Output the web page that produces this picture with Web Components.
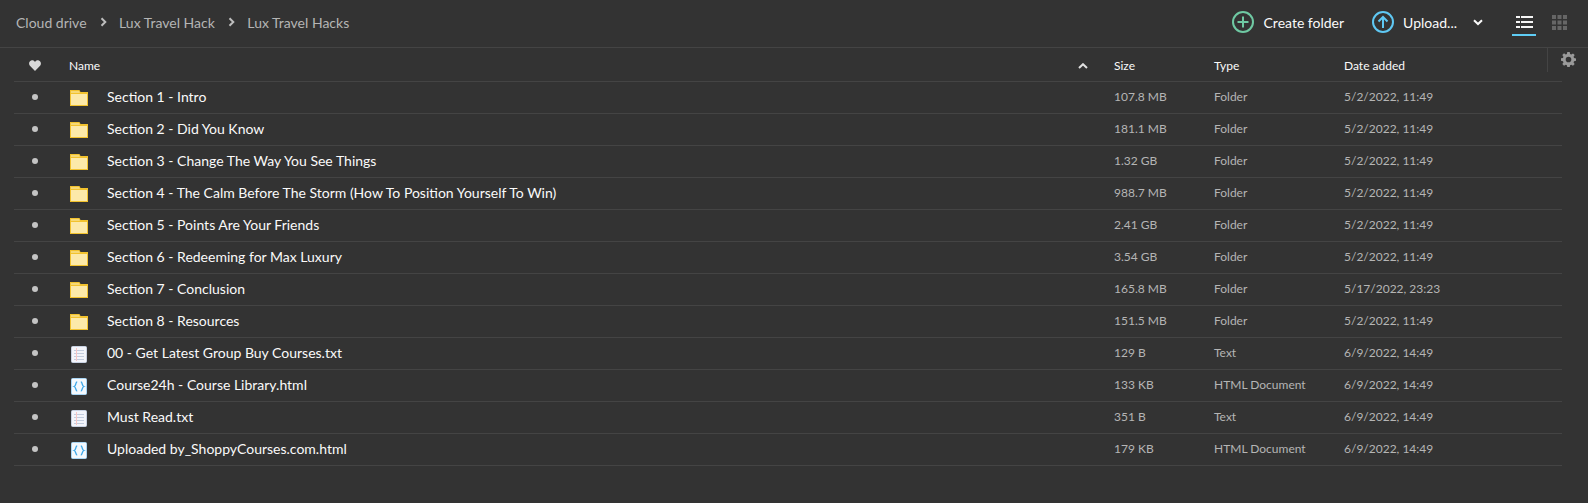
<!DOCTYPE html>
<html>
<head>
<meta charset="utf-8">
<style>
  html, body { margin: 0; height: 100%; background: #333333; }
  body { font-family: Lato, "Open Sans", sans-serif; overflow: hidden; }
</style>
</head>
<body>
<drive-page>
  <drive-topbar slot="top"></drive-topbar>
  <file-list>
    <file-row kind="folder" name="Section 1 - Intro" size="107.8 MB" type="Folder" date="5/2/2022, 11:49"></file-row>
    <file-row kind="folder" name="Section 2 - Did You Know" size="181.1 MB" type="Folder" date="5/2/2022, 11:49"></file-row>
    <file-row kind="folder" name="Section 3 - Change The Way You See Things" size="1.32 GB" type="Folder" date="5/2/2022, 11:49"></file-row>
    <file-row kind="folder" name="Section 4 - The Calm Before The Storm (How To Position Yourself To Win)" size="988.7 MB" type="Folder" date="5/2/2022, 11:49"></file-row>
    <file-row kind="folder" name="Section 5 - Points Are Your Friends" size="2.41 GB" type="Folder" date="5/2/2022, 11:49"></file-row>
    <file-row kind="folder" name="Section 6 - Redeeming for Max Luxury" size="3.54 GB" type="Folder" date="5/2/2022, 11:49"></file-row>
    <file-row kind="folder" name="Section 7 - Conclusion" size="165.8 MB" type="Folder" date="5/17/2022, 23:23"></file-row>
    <file-row kind="folder" name="Section 8 - Resources" size="151.5 MB" type="Folder" date="5/2/2022, 11:49"></file-row>
    <file-row kind="text" name="00 - Get Latest Group Buy Courses.txt" size="129 B" type="Text" date="6/9/2022, 14:49"></file-row>
    <file-row kind="html" name="Course24h - Course Library.html" size="133 KB" type="HTML Document" date="6/9/2022, 14:49"></file-row>
    <file-row kind="text" name="Must Read.txt" size="351 B" type="Text" date="6/9/2022, 14:49"></file-row>
    <file-row kind="html" name="Uploaded by_ShoppyCourses.com.html" size="179 KB" type="HTML Document" date="6/9/2022, 14:49"></file-row>
  </file-list>
</drive-page>

<script>
const chevronRight = `<svg width="8" height="10" viewBox="0 0 8 10"><path d="M1.500 1.200 5.300 5 1.500 8.800" fill="none" stroke="#bdbdbd" stroke-width="2"/></svg>`;

class DrivePage extends HTMLElement {
  constructor() {
    super();
    this.attachShadow({ mode: 'open' });
    this.shadowRoot.innerHTML = `
      <style>
        :host { display: block; width: 1588px; height: 503px; background: #333333; }
      </style>
      <slot name="top"></slot>
      <slot></slot>`;
  }
}

class DriveTopbar extends HTMLElement {
  constructor() {
    super();
    this.attachShadow({ mode: 'open' });
    this.shadowRoot.innerHTML = `
      <style>
        :host { display: flex; align-items: center; height: 44px; padding: 0 17px 3px 16px; border-bottom: 1px solid #444444; font-size: 14px; }
        .crumbs { display: flex; align-items: center; color: #b5b5b5; flex: 1; }
        .crumbs svg { margin: 0 11.500px 0 13px; }
        .btn { display: flex; align-items: center; color: #fafafa; }
        .btn svg { display: block; margin-right: 9px; }
        .create { margin-right: 28px; }
        .create svg { margin-right: 10px; }
        .caret { margin: 0 29px 0 16px; display: block; }
        .views { display: flex; gap: 11px; align-self: flex-start; margin-top: 4px; }
        .view { width: 24px; height: 32px; box-sizing: border-box; padding-top: 6px; display: flex; align-items: center; justify-content: center; border-bottom: 2px solid transparent; }
        .view.on { border-bottom-color: #5fcdf5; }
      </style>
      <div class="crumbs">
        <span>Cloud drive</span>${chevronRight}<span>Lux Travel Hack</span>${chevronRight}<span>Lux Travel Hacks</span>
      </div>
      <div class="btn create">
        <svg width="22" height="22" viewBox="0 0 22 22"><circle cx="11" cy="11" r="10" fill="none" stroke="#6fc9a3" stroke-width="2"/><path d="M11 5.500v11M5.500 11h11" stroke="#6fc9a3" stroke-width="2"/></svg>
        <span>Create folder</span>
      </div>
      <div class="btn">
        <svg width="22" height="22" viewBox="0 0 22 22"><circle cx="11" cy="11" r="10" fill="none" stroke="#5fc8f3" stroke-width="2"/><path d="M11 17V6M6.500 10.500 11 6l4.500 4.500" fill="none" stroke="#5fc8f3" stroke-width="2"/></svg>
        <span>Upload...</span>
      </div>
      <svg class="caret" width="10" height="7" viewBox="0 0 10 7"><path d="M1 1.200 5 5l4-3.800" fill="none" stroke="#fafafa" stroke-width="2"/></svg>
      <div class="views">
        <div class="view on"><svg width="17" height="12" viewBox="0 0 17 12"><path d="M0 1h4M5 1h12M0 6h4M5 6h12M0 11h4M5 11h12" stroke="#f5f5f5" stroke-width="2"/></svg></div>
        <div class="view"><svg width="15" height="15" viewBox="0 0 15 15" fill="#666666"><rect width="4" height="4"/><rect x="5.500" width="4" height="4"/><rect x="11" width="4" height="4"/><rect y="5.500" width="4" height="4"/><rect x="5.500" y="5.500" width="4" height="4"/><rect x="11" y="5.500" width="4" height="4"/><rect y="11" width="4" height="4"/><rect x="5.500" y="11" width="4" height="4"/><rect x="11" y="11" width="4" height="4"/></svg></div>
      </div>`;
  }
}

class FileList extends HTMLElement {
  constructor() {
    super();
    this.attachShadow({ mode: 'open' });
    this.shadowRoot.innerHTML = `
      <style>
        :host { display: block; position: relative; padding: 0 26px 0 14px; }
        .head { display: grid; grid-template-columns: 55px 1045px 1fr; height: 31px; padding-top: 2px; border-bottom: 1px solid #444444; align-items: center; font-size: 12px; color: #fafafa; }
        .head .heart { padding-left: 15px; display: flex; }
        .name { display: flex; justify-content: space-between; align-items: center; padding-right: 26px; }
        .cols { display: grid; grid-template-columns: 100px 130px 1fr; }
        .gear { position: absolute; top: 0; left: 1547px; width: 41px; height: 24px; border-left: 1px solid #444444; box-sizing: border-box; display: flex; justify-content: center; padding-top: 4px; }
      </style>
      <div class="head">
        <div class="heart"><svg width="12" height="11" viewBox="0 0 12 11"><path d="M6 11 .9 5.800C-.6 4 0 1.200 2.200.5 3.800 0 5.200.7 6 2c.8-1.300 2.200-2 3.800-1.500C12 1.200 12.600 4 11.100 5.800z" fill="#d8d8d8"/></svg></div>
        <div class="name"><span>Name</span><svg width="10" height="6" viewBox="0 0 10 6"><path d="M1 5 5 1.200 9 5" fill="none" stroke="#e0e0e0" stroke-width="2"/></svg></div>
        <div class="cols"><span>Size</span><span>Type</span><span>Date added</span></div>
      </div>
      <slot></slot>
      <div class="gear"><svg width="15" height="15" viewBox="0 0 16 16"><path fill="#9a9a9a" fill-rule="evenodd" d="M6.700 0h2.600l.4 2.100 1.300.6L12.800 1.500l1.800 1.800-1.200 1.800.5 1.300 2.100.4v2.600l-2.100.4-.5 1.300 1.200 1.800-1.800 1.800-1.800-1.200-1.300.5-.4 2.100H6.700l-.4-2.100-1.300-.5-1.800 1.200-1.800-1.800 1.200-1.800-.5-1.300L0 9.300V6.700l2.100-.4.500-1.300-1.200-1.800 1.800-1.800 1.800 1.200 1.300-.6zM8 5a3 3 0 1 0 0 6 3 3 0 0 0 0-6z"/></svg></div>`;
  }
}

const fileIcons = {
  folder: `<svg width="18" height="16" viewBox="0 0 18 16"><path d="M0 0h9.500l1 2H18v14H0z" fill="#f2c22e"/><path d="M1 1h8l1 2H1z" fill="#f6d874"/><rect x="1" y="4" width="16" height="11" fill="#fce9a9"/></svg>`,
  text: `<svg width="16" height="17" viewBox="0 0 16 17"><rect x=".5" y=".5" width="15" height="16" rx="1" fill="#f3f5fb" stroke="#c9d2e3"/><path d="M3 4.500h10M3 7.500h10M3 10.500h10M3 13.500h10" stroke="#c3cddf" stroke-width="1"/><path d="M5.500 2v13" stroke="#f7c6c6" stroke-width="1"/></svg>`,
  html: `<svg width="16" height="17" viewBox="0 0 16 17"><rect x=".5" y=".5" width="15" height="16" rx="1" fill="#f4f9fe" stroke="#a9d6f5"/><path d="M6.200 4C4.300 4 5.300 7.800 3.200 8.500 5.300 9.200 4.300 13 6.200 13M9.800 4c1.900 0 .9 3.800 3 4.500-2.100.7-1.100 4.500-3 4.500" fill="none" stroke="#3fa9ea" stroke-width="1.300"/></svg>`
};

class FileRow extends HTMLElement {
  constructor() {
    super();
    this.attachShadow({ mode: 'open' });
  }
  connectedCallback() {
    const kind = this.getAttribute('kind') || 'folder';
    this.shadowRoot.innerHTML = `
      <style>
        :host { display: grid; grid-template-columns: 55px 38px 1007px 100px 130px 1fr; height: 29px; padding-bottom: 2px; border-bottom: 1px solid #444444; align-items: center; font-size: 12px; color: #b5b5b5; }
        .dot { width: 6px; height: 6px; border-radius: 50%; background: #c4c4c4; margin-left: 18px; }
        .icon { display: flex; padding: 3px 0 0 ${kind === 'folder' ? 1 : 2}px; }
        .name { font-size: 14px; color: #fafafa; }
      </style>
      <div class="dot"></div>
      <div class="icon">${fileIcons[kind]}</div>
      <div class="name">${this.getAttribute('name')}</div>
      <div>${this.getAttribute('size')}</div>
      <div>${this.getAttribute('type')}</div>
      <div>${this.getAttribute('date')}</div>`;
  }
}

customElements.define('drive-page', DrivePage);
customElements.define('drive-topbar', DriveTopbar);
customElements.define('file-list', FileList);
customElements.define('file-row', FileRow);
</script>
</body>
</html>
